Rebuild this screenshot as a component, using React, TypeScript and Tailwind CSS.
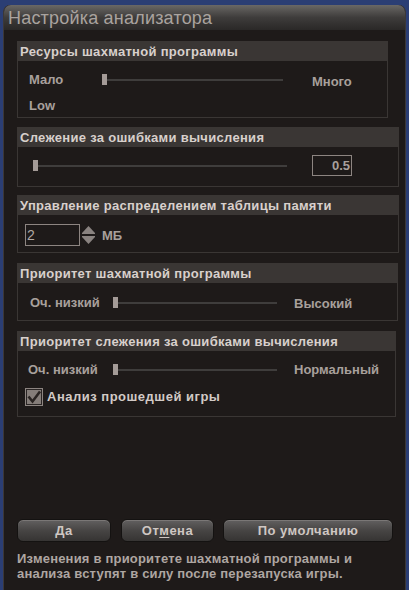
import React from 'react';

const ui = { fontFamily: '"Liberation Sans", Arial, sans-serif' };

function Slider({ trackWidth }: { trackWidth: number }) {
  return (
    <div className="flex items-center shrink-0">
      <div className="w-[5px] h-[11px] bg-[#a49b97]" />
      <div className="h-[2px] bg-[#3f3d3c]" style={{ width: trackWidth }} />
    </div>
  );
}

function Panel({
  title,
  width,
  height,
  children,
}: {
  title: string;
  width: number;
  height: number;
  children?: React.ReactNode;
}) {
  return (
    <div className="flex flex-col shrink-0" style={{ width, height }}>
      <div className="h-[20px] shrink-0 bg-[#3a3634] flex items-center pl-[3px] text-[13px] font-bold tracking-[0.3px] text-[#d8d0cc] leading-none whitespace-nowrap">
        {title}
      </div>
      <div className="flex-1 border border-t-0 border-[#3a3634] flex flex-col">{children}</div>
    </div>
  );
}

function Button({ children, width }: { children: React.ReactNode; width: number }) {
  return (
    <div
      className="h-[23px] shrink-0 rounded-[6px] border border-[#141211] bg-gradient-to-b from-[#626060] via-[#474544] to-[#363433] flex items-center justify-center text-[13px] font-bold tracking-[0.5px] text-[#cfc7c3] shadow-[inset_0_1px_0_#7a7776]"
      style={{ width }}
    >
      {children}
    </div>
  );
}

const label = 'text-[13px] font-bold tracking-[0px] text-[#a8a09c] leading-none whitespace-nowrap';

export default function App() {
  return (
    <div className="w-[409px] h-[590px] bg-[#2b3e74] pt-[5px] pl-[3px] overflow-hidden" style={ui}>
      <div className="w-[403px] h-[585px] flex flex-col bg-[#1e1a19] border-l border-r border-[#3c3837] rounded-t-[7px]">
        {/* Title bar */}
        <div className="h-[25px] shrink-0 rounded-t-[7px] bg-gradient-to-b from-[#6a6866] via-[#3e3c3b] to-[#2a2827] flex items-center pl-[4px]">
          <span className="text-[18px] text-[#aaa39f] leading-none tracking-[0.2px]">Настройка анализатора</span>
        </div>

        <div className="flex flex-col pl-[13px] pt-[11px] flex-1">
          <div className="flex flex-col gap-[9px]">
            <Panel title="Ресурсы шахматной программы" width={371} height={77}>
              <div className="flex items-center pl-[11px] pt-[10px]">
                <span className={`${label} w-[73px] shrink-0`}>Мало</span>
                <Slider trackWidth={176} />
                <span className={`${label} ml-[29px] mt-[4px]`}>Много</span>
              </div>
              <div className={`${label} pl-[11px] pt-[11px]`}>Low</div>
            </Panel>

            <Panel title="Слежение за ошибками вычисления" width={382} height={60}>
              <div className="flex items-center pl-[15px] pt-[8px]">
                <Slider trackWidth={249} />
                <div className="ml-[25px] w-[40px] h-[21px] shrink-0 border border-[#8d8581] flex items-center justify-end pr-[1px] text-[13px] font-bold text-[#a8a09c]">
                  0.5
                </div>
              </div>
            </Panel>
          </div>

          <div className="flex flex-col gap-[10px] mt-[8px]">
            <Panel title="Управление распределением таблицы памяти" width={382} height={58}>
              <div className="flex items-center pl-[7px] pt-[9px]">
                <div className="w-[55px] h-[22px] shrink-0 border border-[#8d8581] flex items-center pl-[1px] text-[14px] text-[#b0a8a4]">
                  2
                </div>
                <svg width="15" height="22" viewBox="0 0 15 22" className="ml-[1px] shrink-0">
                  <polygon points="1,9 7.5,2 14,9" fill="#8a8380" />
                  <rect x="1" y="9" width="13" height="1" fill="#8a8380" />
                  <polygon points="1,13 14,13 7.5,20" fill="#8a8380" />
                  <rect x="1" y="12" width="13" height="1" fill="#8a8380" />
                </svg>
                <span className={`${label} ml-[6px]`}>МБ</span>
              </div>
            </Panel>

            <Panel title="Приоритет шахматной программы" width={381} height={58}>
              <div className="flex items-center pl-[12px] pt-[12px]">
                <span className={`${label} w-[83px] shrink-0`}>Оч. низкий</span>
                <Slider trackWidth={159} />
                <span className={`${label} ml-[17px] mt-[2px]`}>Высокий</span>
              </div>
            </Panel>

            <Panel title="Приоритет слежения за ошибками вычисления" width={379} height={86}>
              <div className="flex items-center pl-[10px] pt-[12px]">
                <span className={`${label} w-[85px] shrink-0`}>Оч. низкий</span>
                <Slider trackWidth={159} />
                <span className={`${label} ml-[17px]`}>Нормальный</span>
              </div>
              <div className="flex items-center pl-[7px] pt-[11px]">
                <svg width="18" height="18" viewBox="0 0 18 18" className="shrink-0">
                  <rect x="0.5" y="0.5" width="17" height="17" fill="#2a2524" stroke="#8d8581" />
                  <rect x="2" y="2" width="14" height="14" fill="#857d79" />
                  <polyline points="3.5,8.5 7.5,13.5 15,3.5" fill="none" stroke="#2a2422" strokeWidth="2.6" />
                </svg>
                <span className="ml-[4px] text-[13px] font-bold tracking-[0.5px] text-[#d2cac6] whitespace-nowrap">
                  Анализ прошедшей игры
                </span>
              </div>
            </Panel>
          </div>

          <div className="flex items-center gap-[10px] mt-[102px] shrink-0">
            <Button width={94}>
              <span className="underline underline-offset-2">Д</span>а
            </Button>
            <Button width={93}>
              От<span className="underline underline-offset-2">м</span>ена
            </Button>
            <div className="ml-[-1px]">
              <Button width={170}>По умолчанию</Button>
            </div>
          </div>

          <div className="mt-[9px] text-[13px] font-bold tracking-[0.2px] leading-[15px] text-[#aea6a2] whitespace-nowrap shrink-0">
            Изменения в приоритете шахматной программы и
            <br />
            анализа вступят в силу после перезапуска игры.
          </div>
        </div>
      </div>
    </div>
  );
}
